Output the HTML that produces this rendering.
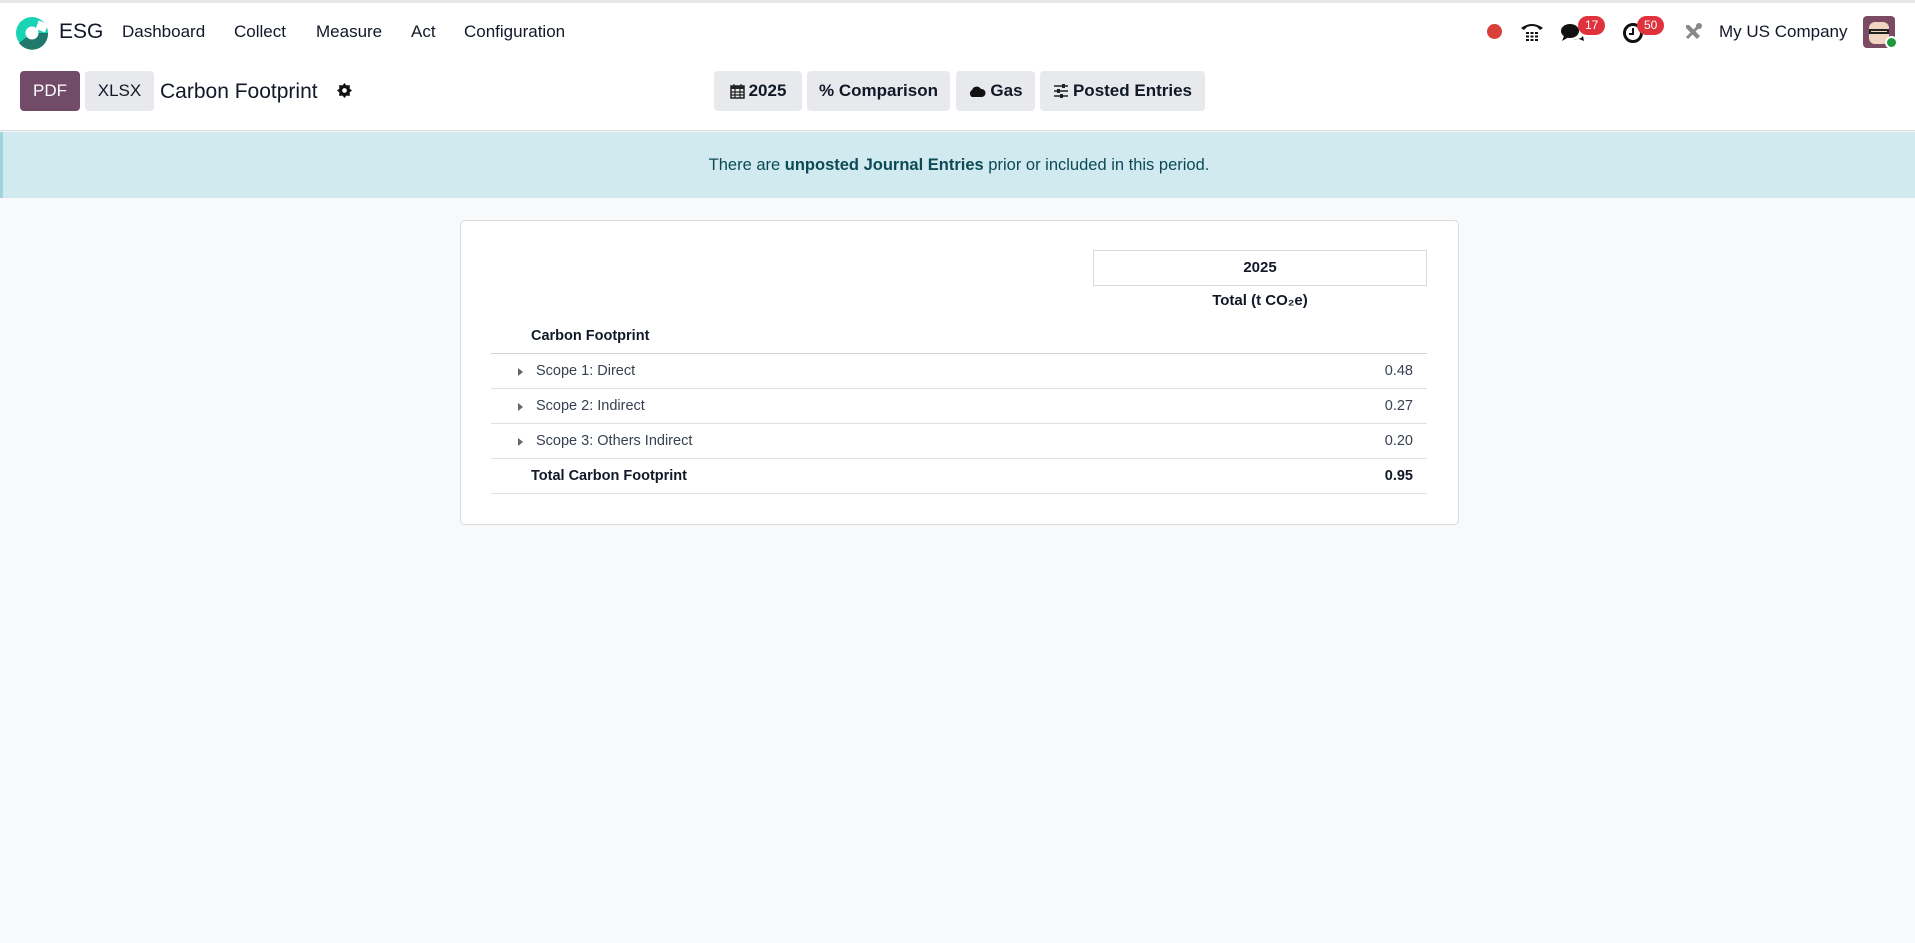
<!DOCTYPE html>
<html><head><meta charset="utf-8"><style>
*{box-sizing:border-box;margin:0;padding:0}
body{width:1915px;height:943px;background:#f8f9fa;font-family:"Liberation Sans",sans-serif;color:#111827;position:relative;overflow:hidden}
.abs{position:absolute}
.top{left:0;top:0;width:1915px;height:131px;background:#fff;border-top:3px solid #e5e7eb;border-bottom:1px solid #d8dadd}
.nav{font-size:17px;color:#111827}
.btn{position:absolute;top:71px;height:40px;border-radius:4px;background:#e7e9ed;font-size:17px;font-weight:bold;display:flex;align-items:center;justify-content:center;color:#111827;gap:4px}
.badge{position:absolute;background:#e0323c;color:#fff;font-size:12px;border-radius:10px;height:19px;line-height:19px;padding:0 7px}
.alert{left:0;top:132px;width:1915px;height:66px;background:#d0eaef;border-left:3px solid #9fd4dc;color:#0c4a55;font-size:16.5px;text-align:center;line-height:66px}
.card{left:460px;top:220px;width:999px;height:305px;background:#fff;border:1px solid #d8dadd;border-radius:5px}
.row{position:absolute;left:491px;width:936px;height:35px;border-bottom:1px solid #dee2e6;font-size:14.5px;line-height:35px}
.row .v{position:absolute;right:14px}
.tri{position:absolute;left:27px;top:14px;width:0;height:0;border-left:5px solid #666;border-top:4px solid transparent;border-bottom:4px solid transparent}
</style></head><body>
<div class="abs top"></div>
<svg class="abs" style="left:15px;top:16px" width="34" height="34" viewBox="0 0 34 34"><circle cx="17" cy="17" r="16" fill="#1ad3b4"/><path d="M17 17 L33 17 A16 16 0 0 1 4 27 Z" fill="#1f7a6b"/><circle cx="17" cy="17" r="6.5" fill="#fff"/><rect x="22" y="6" width="10" height="9" fill="#fff" transform="rotate(20 27 10)"/></svg>
<div class="abs" style="left:59px;top:20px;font-size:21px">ESG</div>
<div class="abs nav" style="left:122px;top:22px">Dashboard</div>
<div class="abs nav" style="left:234px;top:22px">Collect</div>
<div class="abs nav" style="left:316px;top:22px">Measure</div>
<div class="abs nav" style="left:411px;top:22px">Act</div>
<div class="abs nav" style="left:464px;top:22px">Configuration</div>
<div class="abs" style="left:1487px;top:24px;width:15px;height:15px;border-radius:50%;background:#d9403a"></div>
<svg class="abs" style="left:1520px;top:21px" width="24" height="22" viewBox="0 0 24 22"><path d="M1 7 Q12 -1 23 7 L20 9 L17 6 Q12 4 7 6 L4 9 Z" fill="#111"/><g fill="#111"><rect x="6" y="11" width="3" height="2"/><rect x="10.5" y="11" width="3" height="2"/><rect x="15" y="11" width="3" height="2"/><rect x="6" y="14.5" width="3" height="2"/><rect x="10.5" y="14.5" width="3" height="2"/><rect x="15" y="14.5" width="3" height="2"/><rect x="6" y="18" width="3" height="2"/><rect x="10.5" y="18" width="3" height="2"/><rect x="15" y="18" width="3" height="2"/></g></svg>
<svg class="abs" style="left:1560px;top:22px" width="26" height="22" viewBox="0 0 26 22"><ellipse cx="10" cy="9" rx="9" ry="7" fill="#111"/><path d="M4 14 L2 19 L9 15Z" fill="#111"/><path d="M13 17 Q20 18 23 14 L24 19 L19 17Z" fill="#111"/></svg>
<div class="badge" style="left:1578px;top:16px">17</div>
<svg class="abs" style="left:1622px;top:22px" width="22" height="22" viewBox="0 0 22 22"><circle cx="11" cy="11" r="8.5" fill="none" stroke="#111" stroke-width="3"/><path d="M11 6 V12 H7" stroke="#111" stroke-width="2" fill="none"/></svg>
<div class="badge" style="left:1637px;top:16px">50</div>
<svg class="abs" style="left:1683px;top:22px" width="20" height="20" viewBox="0 0 20 20"><path d="M4 16 L16 4" stroke="#888" stroke-width="3"/><circle cx="16" cy="4" r="3" fill="#888"/><path d="M3 3 L6 3 L17 14 L14 17 L3 6Z" fill="#888"/></svg>
<div class="abs" style="left:1719px;top:22px;font-size:17px">My US Company</div>
<div class="abs" style="left:1863px;top:16px;width:32px;height:32px;border-radius:4px;background:#7b4a63"><div style="position:absolute;left:6px;top:6px;width:20px;height:22px;background:#f1d5c0;border-radius:6px"></div><div style="position:absolute;left:6px;top:13px;width:20px;height:5px;border:2px solid #222"></div></div>
<div class="abs" style="left:1885px;top:36px;width:13px;height:13px;border-radius:50%;background:#1a9a3a;border:2px solid #fff"></div>

<div class="btn" style="left:20px;width:60px;background:#714b67;color:#fff;font-weight:normal">PDF</div>
<div class="btn" style="left:85px;width:69px;font-weight:normal">XLSX</div>
<div class="abs" style="left:160px;top:80px;font-size:21px">Carbon Footprint</div>
<svg class="abs" style="left:337px;top:83px" width="15" height="15" viewBox="0 0 16 16"><path d="M8 0 L10 2.5 L13.7 2.3 L13.5 6 L16 8 L13.5 10 L13.7 13.7 L10 13.5 L8 16 L6 13.5 L2.3 13.7 L2.5 10 L0 8 L2.5 6 L2.3 2.3 L6 2.5Z" fill="#111"/><circle cx="8" cy="8" r="2.5" fill="#fff"/></svg>
<div class="btn" style="left:714px;width:88px"><svg width="15" height="16" viewBox="0 0 15 16"><rect x="1" y="3" width="13" height="12" fill="none" stroke="#222" stroke-width="1.5"/><rect x="1" y="3" width="13" height="3" fill="#222"/><path d="M4 1v4M11 1v4M1 9h13M1 12h13M5 6v9M10 6v9" stroke="#222" stroke-width="1.2"/></svg>2025</div>
<div class="btn" style="left:807px;width:143px">% Comparison</div>
<div class="btn" style="left:956px;width:79px"><svg width="18" height="13" viewBox="0 0 18 13"><path d="M4 12 A4 4 0 0 1 4 5 A5 5 0 0 1 13 4 A4 4 0 0 1 14 12Z" fill="#111"/></svg>Gas</div>
<div class="btn" style="left:1040px;width:165px"><svg width="16" height="14" viewBox="0 0 16 14"><path d="M1 2h14M1 7h14M1 12h14" stroke="#222" stroke-width="1.5"/><rect x="9" y="0" width="3" height="4" fill="#222"/><rect x="4" y="5" width="3" height="4" fill="#222"/><rect x="7" y="10" width="3" height="4" fill="#222"/></svg>Posted Entries</div>

<div class="abs alert">There are <b>unposted Journal Entries</b> prior or included in this period.</div>

<div class="abs card"></div>
<div class="abs" style="left:1093px;top:250px;width:334px;height:36px;border:1px solid #d8dadd;text-align:center;line-height:34px;font-weight:bold;font-size:15px">2025</div>
<div class="abs" style="left:1093px;top:292px;width:334px;text-align:center;font-weight:bold;font-size:15px">Total (t CO₂e)</div>
<div class="row" style="top:319px;border-bottom:1px solid #cfd3d7"><b style="position:absolute;left:40px">Carbon Footprint</b></div>
<div class="row" style="top:354px;color:#374151"><div class="tri"></div><span style="position:absolute;left:45px">Scope 1: Direct</span><span class="v">0.48</span></div>
<div class="row" style="top:389px;color:#374151"><div class="tri"></div><span style="position:absolute;left:45px">Scope 2: Indirect</span><span class="v">0.27</span></div>
<div class="row" style="top:424px;color:#374151"><div class="tri"></div><span style="position:absolute;left:45px">Scope 3: Others Indirect</span><span class="v">0.20</span></div>
<div class="row" style="top:459px;font-weight:bold"><span style="position:absolute;left:40px">Total Carbon Footprint</span><span class="v">0.95</span></div>
</body></html>
